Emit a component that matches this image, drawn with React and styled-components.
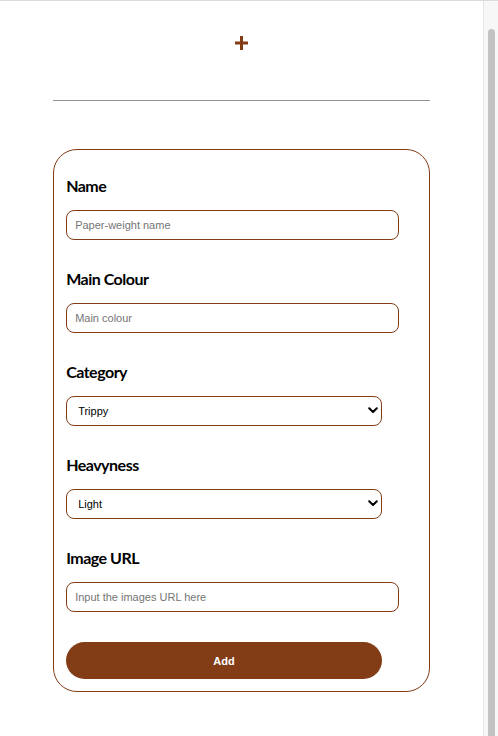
import styled, { createGlobalStyle } from "styled-components";

const brown = "#823c16";

const GlobalStyle = createGlobalStyle`
    body {
        margin: 0;
        background: #fff;
        font-family: "Liberation Sans", Arial, sans-serif;
    }
    * {
        box-sizing: border-box;
    }
`;

// window frame: the page column plus the scrollbar on its right
const Shell = styled.div`
    display: flex;
    height: 100vh;
    overflow: hidden;
    border-top: 1px solid #dcdcdc;
`;

const Main = styled.main`
    flex: 1;
    min-width: 0;
    overflow: hidden;
`;

const ScrollTrack = styled.div`
    width: 15px;
    flex-shrink: 0;
    display: flex;
    padding: 28px 3px 0 4px;
    background: #f7f7f7;
    border-left: 1px solid #e6e6e6;
`;

const ScrollThumb = styled.div`
    flex: 1;
    background: #c2c2c2;
    border-radius: 4px 4px 0 0;
`;

const Header = styled.header`
    display: flex;
    justify-content: center;
    padding: 35px 0 50px;
`;

const Divider = styled.hr`
    width: 78%;
    margin: 0 auto;
    border: 0;
    border-top: 1px solid #949494;
`;

const Card = styled.form`
    width: 78%;
    margin: 48px auto 0;
    padding: 26px 12px 12px;
    border: 1px solid ${brown};
    border-radius: 24px;
    display: flex;
    flex-direction: column;
`;

const Field = styled.div`
    display: flex;
    flex-direction: column;
    margin-bottom: 29px;
`;

const Label = styled.label`
    font-family: Lato, "Noto Sans", sans-serif;
    font-weight: 700;
    font-size: 16px;
    letter-spacing: -0.5px;
    line-height: 20px;
    color: #000;
    margin-bottom: 14px;
`;

const TextInput = styled.input`
    width: 95%;
    height: 30px;
    padding: 0 8px;
    border: 1px solid ${brown};
    border-radius: 8px;
    font-family: "Liberation Sans", Arial, sans-serif;
    font-size: 11px;
    color: #000;
    outline: none;
    &::placeholder {
        color: #757575;
    }
`;

const SelectWrap = styled.div`
    position: relative;
    width: 90%;
`;

const Select = styled.select`
    width: 100%;
    height: 30px;
    padding: 0 24px 0 11px;
    border: 1px solid ${brown};
    border-radius: 8px;
    background: #fff;
    font-family: "Liberation Sans", Arial, sans-serif;
    font-size: 11px;
    color: #000;
    appearance: none;
    outline: none;
`;

const Chevron = styled.svg`
    position: absolute;
    right: 4px;
    top: 11px;
    pointer-events: none;
`;

const AddButton = styled.button`
    width: 90%;
    height: 37px;
    margin-top: 1px;
    border: 0;
    border-radius: 19px;
    background: ${brown};
    color: #fff;
    font-family: "Liberation Sans", Arial, sans-serif;
    font-weight: 700;
    font-size: 11px;
    cursor: pointer;
`;

const PlusIcon = () => (
    <svg width="13" height="14" viewBox="0 0 13 14">
        <rect x="5" y="0" width="3" height="14" fill={brown} />
        <rect x="0" y="5.5" width="13" height="3" fill={brown} />
    </svg>
);

const SelectField = ({ label, options }) => (
    <Field>
        <Label>{label}</Label>
        <SelectWrap>
            <Select defaultValue={options[0]}>
                {options.map(o => <option key={o}>{o}</option>)}
            </Select>
            <Chevron width="10" height="7" viewBox="0 0 10 7">
                <path d="M1.2 1.2 L5 5 L8.8 1.2" fill="none" stroke="#000" strokeWidth="2" strokeLinecap="round" strokeLinejoin="round" />
            </Chevron>
        </SelectWrap>
    </Field>
);

const InputField = ({ label, placeholder }) => (
    <Field>
        <Label>{label}</Label>
        <TextInput placeholder={placeholder} />
    </Field>
);

export default function App() {
    return (
        <>
            <GlobalStyle />
            <Shell>
                <Main>
                    <Header>
                        <PlusIcon />
                    </Header>
                    <Divider />
                    <Card onSubmit={e => e.preventDefault()}>
                        <InputField label="Name" placeholder="Paper-weight name" />
                        <InputField label="Main Colour" placeholder="Main colour" />
                        <SelectField label="Category" options={["Trippy", "Classic", "Modern"]} />
                        <SelectField label="Heavyness" options={["Light", "Medium", "Heavy"]} />
                        <InputField label="Image URL" placeholder="Input the images URL here" />
                        <AddButton type="submit">Add</AddButton>
                    </Card>
                </Main>
                <ScrollTrack>
                    <ScrollThumb />
                </ScrollTrack>
            </Shell>
        </>
    );
}
